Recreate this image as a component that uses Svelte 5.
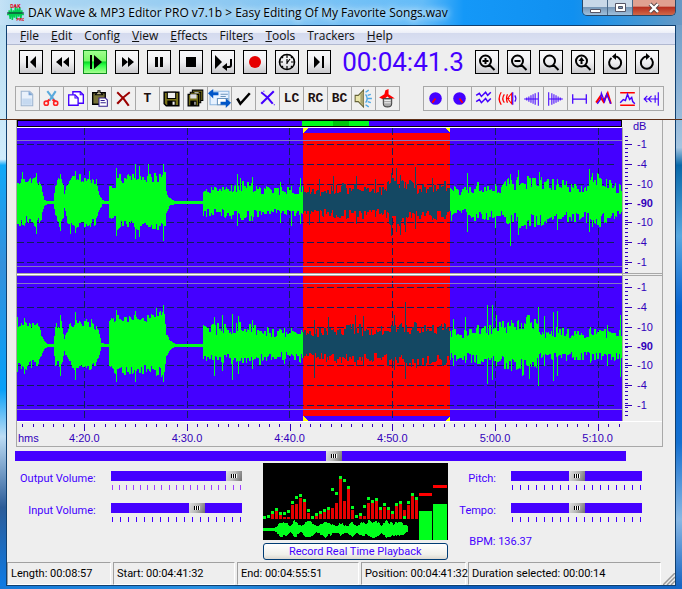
<script lang="ts">
  const menus = [
    ['', 'F', 'ile'], ['', 'E', 'dit'], ['Confi', 'g', ''], ['', 'V', 'iew'], ['', 'E', 'ffects'],
    ['Filte', 'r', 's'], ['', 'T', 'ools'], ['Trackers', '', ''], ['', 'H', 'elp']
  ];

  // every icon is a list of [path, fill, stroke, stroke width]
  const lens = 'M16 11a5.5 5.5 0 1 1-11 0a5.5 5.5 0 1 1 11 0M14.5 15l5 5';

  const transport = [
    { label: 'Go to start', shapes: [['M7 6h2v12H7zM17 6v12l-6-6z', '#000']] },
    { label: 'Rewind', shapes: [['M11 7v10l-6-5zM18 7v10l-6-5z', '#000']] },
    { label: 'Play', active: true, shapes: [['M7 5h2v14H7zM11 5l8 7-8 7z', '#000']] },
    { label: 'Fast forward', shapes: [['M7 7l6 5-6 5zM13 7l6 5-6 5z', '#000']] },
    { label: 'Pause', shapes: [['M8 7h3v10H8zM13 7h3v10h-3z', '#000']] },
    { label: 'Stop', shapes: [['M7 7h10v10H7z', '#000']] },
    { label: 'Loop', shapes: [['M4 5l7 7-7 7z', '#000'], ['M20 9v6q0 2-2 2h-4', 'none', '#000', 2], ['M16 13v8l-5-4z', '#000']] },
    { label: 'Record', shapes: [['M18 12a6 6 0 1 1-12 0a6 6 0 1 1 12 0', '#e60000']] },
    { label: 'Timer', shapes: [['M19.5 12a7.5 7.5 0 1 1-15 0a7.5 7.5 0 1 1 15 0', 'none', '#000', 1.6], ['M12 5v3M12 16v3M5 12h3M16 12h3M12 14V9M12 13l3-4M7 7l1 1M17 7l-1 1M7 17l1-1M17 17l-1-1', 'none', '#000', 1.2]] },
    { label: 'Go to end', shapes: [['M7 6l6 6-6 6zM15 6h2v12h-2z', '#000']] }
  ];

  const zooms = [
    { label: 'Zoom in', shapes: [[lens, 'none', '#000', 2], ['M10.5 8v6M7.5 11h6', 'none', '#000', 2]] },
    { label: 'Zoom out', shapes: [[lens, 'none', '#000', 2], ['M7.5 11h6', 'none', '#000', 2]] },
    { label: 'Zoom full', shapes: [[lens, 'none', '#000', 2]] },
    { label: 'Zoom vertical', shapes: [[lens, 'none', '#000', 2], ['M10.5 10v4', 'none', '#000', 2], ['M10.5 7l3 4h-6z', '#000']] },
    { label: 'Undo', shapes: [['M8.5 8a6 6 0 1 0 7.500 .2q-1.500-1.700-4-1.700', 'none', '#000', 2], ['M13 3v7l-4-3.500z', '#000']] },
    { label: 'Redo', shapes: [['M15.500 8a6 6 0 1 1-7.500 .2q1.500-1.700 4-1.700', 'none', '#000', 2], ['M11 3v7l4-3.500z', '#000']] }
  ];

  const blue = '#4400ff';
  const floppy = 'M5 6h14v13H7l-2-2z';

  const edit = [
    { label: 'New', shapes: [['M6 5h8l3 3v11H6z', '#e9f1fb', '#9db4d0', 1], ['M7 12h9v6H7z', '#c5d9f0'], ['M13 5v4h4z', '#7aa3d4']] },
    { label: 'Cut', shapes: [['M8 5l7 9M16 5l-6 9', 'none', '#5aa9dc', 2], ['M10 13l-2 2M13 13l3 2', 'none', '#f22', 2], ['M9 16.500a2 2 0 1 1-4 0a2 2 0 1 1 4 0M18 16.500a2 2 0 1 1-4 0a2 2 0 1 1 4 0', 'none', '#f22', 1.5]] },
    { label: 'Copy', shapes: [['M9.500 5.500h7l3 3v8h-10z', '#fff', blue, 1.3], ['M5.500 8.500h6l3 3v7h-9z', '#fff', blue, 1.3], ['M11.500 8.500v3h3M16.500 5.500v3h3', 'none', blue, 1]] },
    { label: 'Paste', shapes: [['M5.500 6.500h12v11h-12z', '#777236', '#000', 1.3], ['M8 8.500h7l-1.500-2h-1v-2h-2v2h-1z', '#ddd4aa', '#000', 1], ['M11.500 11.500h6l2 2v6h-8z', '#fff', '#352090', 1], ['M13 14h4M13 16h5', 'none', '#352090', 1]] },
    { label: 'Delete', shapes: [['M6 6q7 6 11 13M18 6Q11 11 6 17', 'none', '#9c0000', 2]] },
    { label: 'Title', text: 'T' },
    { label: 'Save', shapes: [[floppy, '#777018', '#000', 1.4], ['M8 6h8v6H8z', '#eee', '#000', 1], ['M8 14h8v5H8z', '#000'], ['M13 15h2v3h-2z', '#eee']] },
    { label: 'Save all', shapes: [['M9 4h10v10H9z', '#777018', '#000', 1], ['M7 6h10v10H7z', '#777018', '#000', 1], ['M5 8h10v11H5z', '#777018', '#000', 1.3], ['M7 8h6v4H7zM11 6h4v1h-4z', '#ddd'], ['M7 14h6v5H7z', '#000'], ['M11 15h1v3h-1z', '#fff']] },
    { label: 'Transfer', shapes: [['M3 5h18v13H3z', '#e7f2ff', '#8cb6e0', 1], ['M1 7l5-4v3h5v3H6v3z', '#0056c8'], ['M13 8h7M13 10h5', 'none', '#6b94bc', 1], ['M10 12h10v6H10z', '#fff', '#6b94bc', 1], ['M23 16l-5-4v3h-5v3h5v3z', '#0056c8']] },
    { label: 'Apply', shapes: [['M6 12l3 5L18 7', 'none', '#000', 2.4]] },
    { label: 'Clear', shapes: [['M6 6q7 5 11 11M18 5L6 17', 'none', blue, 2], ['M18 18h1M8 5h1', 'none', blue, 1]] },
    { label: 'Left channel', text: 'LC' },
    { label: 'Right channel', text: 'RC' },
    { label: 'Both channels', text: 'BC' },
    { label: 'Speaker', shapes: [['M4 9h3l5-5v16l-5-5H4z', '#e8e4a8', '#666338', 1], ['M9 8l3-3v14l-3-3z', '#a8a470'], ['M14 8q3 4 0 8M14 6l3-2M16 9l3-1M16 12h4M16 15l3 1M14 18l3 2', 'none', '#4ca7e4', 1.3]] },
    { label: 'Noise remover', shapes: [['M4 11l5-3 1-4 3-1v5l6 4h-5l-2-2-4 3z', '#f00'], ['M8 12h8v5q0 3-4 3t-4-3z', '#aaa', '#444', 1], ['M9 14h6M9 16h6', 'none', '#eee', 1]] }
  ];

  const effects = [
    { label: 'Pan left', shapes: [['M18 12a6 6 0 1 1-12 0a6 6 0 1 1 12 0', blue], ['M12 12l-3 4', 'none', '#f00', 1.5]] },
    { label: 'Pan right', shapes: [['M18 12a6 6 0 1 1-12 0a6 6 0 1 1 12 0', blue], ['M12 12l3 4', 'none', '#f00', 1.5]] },
    { label: 'Chorus', shapes: [['M5 9l3-2 2 3 4-4 2 3 3-3M5 15l3-2 2 3 4-4 2 3 3-3', 'none', blue, 1.4]] },
    { label: 'Echo', shapes: [['M6 6q-4 6 0 12M9 8q-3 4 0 8M12 8q-2 4 0 8', 'none', '#f00', 1.2], ['M14 12h-2l4-5v10l-4-5', 'none', '#f00', 1], ['M17 6v12M19 9q2 3 0 6', 'none', blue, 1.2]] },
    { label: 'Fade in', shapes: [['M5 12.500h14M7.500 11v3M9.500 10v5M11.500 9v7M13.500 8v9M15.500 7v11M18.500 6v13', 'none', blue, 1]] },
    { label: 'Fade out', shapes: [['M5 12.500h14M16.500 11v3M14.500 10v5M12.500 9v7M10.500 8v9M8.500 7v11M5.500 6v13', 'none', blue, 1]] },
    { label: 'Silence', shapes: [['M5.500 8v9M18.500 8v9M6 12.500h13', 'none', blue, 1.2]] },
    { label: 'Amplify', shapes: [['M5 16l4-6 3 5 4-8 3 10', 'none', '#f00', 2], ['M6 17l3-4 1-6 3 8 2-7 4 9', 'none', blue, 1.3]] },
    { label: 'Normalize', shapes: [['M5 6.500h14M5 18.500h14', 'none', '#f00', 1.3], ['M5 16l3-3 2 1 2-6 2 5 2-2 1 4 2 2', 'none', blue, 1.4]] },
    { label: 'Reverse', shapes: [['M5 12.500h13M8 9.500l-3 3 3 3M12 9.500l-3 3 3 3M15.500 9v7M18.500 6v13', 'none', blue, 1.1]] }
  ];

  // loudness envelopes: [x, level], straight lines between the points
  const envTop = [
    [0, 24], [6, 27], [9, 20], [14, 24], [19, 28], [24, 18], [27, 3], [30, 1], [36, 1], [38, 18], [43, 28], [46, 22], [47, 8],
    [50, 22], [60, 27], [70, 26], [79, 23], [82, 8], [85, 2], [91, 1], [92, 18], [98, 18], [99, 30], [108, 26], [120, 29],
    [138, 28], [148, 31], [149, 12], [152, 4], [158, 1], [185, 1], [186, 15], [204, 15], [220, 20], [240, 19], [257, 14],
    [285, 16], [300, 13], [320, 18], [350, 18], [366, 14], [373, 24], [385, 26], [400, 16], [417, 20], [433, 20], [442, 12],
    [460, 20], [480, 18], [493, 24], [510, 28], [530, 26], [550, 21], [566, 20], [580, 28], [605, 16]
  ];
  const envBottom = [
    [0, 24], [8, 26], [15, 22], [20, 23], [26, 6], [30, 1], [36, 1], [38, 22], [44, 26], [47, 6], [51, 20], [60, 28], [74, 25],
    [81, 18], [84, 2], [91, 1], [92, 26], [99, 30], [112, 31], [130, 29], [147, 35], [149, 12], [152, 6], [158, 1], [185, 1],
    [186, 20], [206, 21], [225, 23], [240, 21], [260, 15], [286, 19], [301, 16], [340, 21], [362, 17], [370, 21], [400, 23],
    [425, 22], [442, 14], [460, 21], [480, 22], [505, 32], [520, 24], [526, 11], [535, 18], [560, 15], [580, 16], [605, 15]
  ];

  // single loud hits: [x, up, down]
  const hitsTop = [
    [5, 30, 22], [19, 29, 31], [43, 28, 28], [53, 22, 31], [58, 31, 30], [72, 31, 22], [99, 34, 33], [118, 38, 36], [122, 36, 34],
    [131, 38, 24], [146, 38, 38], [220, 28, 23], [223, 24, 15], [235, 25, 18], [263, 20, 20], [274, 16, 23], [283, 24, 21],
    [292, 15, 22], [302, 23, 19], [316, 26, 14], [339, 26, 21], [358, 23, 14], [374, 29, 33], [379, 34, 29], [383, 27, 32],
    [388, 20, 29], [398, 35, 26], [415, 24, 17], [450, 29, 29], [478, 18, 25], [493, 28, 43], [501, 32, 32], [522, 30, 22],
    [540, 23, 27], [572, 33, 29], [575, 29, 24], [598, 19, 13]
  ];
  const hitsBottom = [
    [0, 28, 26], [7, 27, 28], [43, 30, 30], [58, 33, 34], [99, 35, 36], [118, 34, 36], [139, 37, 30], [146, 40, 36], [197, 28, 30],
    [205, 30, 25], [215, 31, 34], [221, 29, 28], [235, 25, 23], [267, 17, 18], [297, 25, 32], [311, 28, 14], [338, 30, 16],
    [346, 29, 19], [377, 30, 24], [388, 43, 33], [399, 22, 22], [436, 26, 20], [448, 28, 17], [470, 40, 38], [475, 40, 34],
    [479, 30, 20], [512, 30, 33], [521, 38, 40], [527, 29, 20], [536, 33, 35], [540, 34, 30], [573, 18, 17], [590, 20, 20], [603, 30, 31]
  ];

  function level(env: number[][], x: number) {
    const i = env.findIndex(p => p[0] > x);
    if (i < 1) return env[env.length - 1][1];
    const [x0, a] = env[i - 1];
    const [x1, b] = env[i];
    return a + (b - a) * (x - x0) / (x1 - x0);
  }

  function noise(n: number) {
    const s = Math.sin(n * 127.1) * 43758.5453;
    return s - Math.floor(s);
  }

  function wave(env: number[][], hits: number[][], from: number, to: number, seed: number) {
    let d = '';
    for (let x = from; x < to; x++) {
      const base = level(env, x);
      const rough = x > 185 ? 0.6 : 0.35;
      const step = Math.floor(x * 0.6) + seed;
      let up = base * (1.05 - rough * noise(step));
      let down = base * (1 - rough * noise(step + 900)) * 0.96;
      const hit = hits.find(h => h[0] === x);
      if (hit) {
        up = hit[1];
        down = hit[2];
      }
      d += `M${x + 0.5} ${-Math.round(up) - 1}V${Math.round(down)}`;
    }
    return d;
  }

  const selStart = 286;
  const selEnd = 433;

  const channels = [
    { name: 'Left', top: -75, env: envTop, hits: hitsTop, seed: 3, marks: 'M286-75h5l-5 5zM433-75h-5l5 5z' },
    { name: 'Right', top: -70, env: envBottom, hits: hitsBottom, seed: 41, marks: 'M286 75h5l-5-5zM433 75h-5l5-5z' }
  ];

  const levels = [-59, -39, -19, 19, 39, 59];
  const dbLabels = ['-1', '-4', '-10', '-90', '-10', '-4', '-1'];
  const times = ['4:20.0', '4:30.0', '4:40.0', '4:50.0', '5:00.0', '5:10.0'];
  const timeX = [67, 170, 272, 375, 478, 581];

  let timeTicks = '';
  for (let i = -6; i < 54; i++) {
    timeTicks += `M${Math.round(67 + i * 10.28) + 0.5} 2v${i % 10 === 0 ? 7 : 3}`;
  }

  let dbTicks = '';
  for (let y = -67; y < 70; y += 4) dbTicks += `M2 ${y + 0.5}h3`;
  for (const y of [...levels, 0]) dbTicks += `M2 ${y + 0.5}h7`;

  const bars = [0, 0, 5, 8, 4, 2, 2, 14, 15, 21, 17, 6, 0, 3, 5, 7, 9, 11, 16, 40, 18, 30, 9, 0, 3, 3, 16, 16, 18, 9, 12, 9, 5, 13, 15, 9, 14, 23, 19];
  const peaks = [2, 3, 7, 10, 6, 6, 8, 17, 22, 24, 19, 9, 2, 5, 7, 9, 11, 30, 26, 42, 39, 32, 12, 3, 5, 13, 21, 18, 20, 11, 15, 11, 7, 15, 17, 2, 17, 25, 21];
  const miniEnv = [[0, 1], [13, 2], [16, 8], [24, 6], [27, 3], [31, 9], [38, 3], [42, 8], [47, 8], [53, 3], [62, 8], [74, 3], [77, 7], [84, 3], [88, 9], [93, 3], [98, 8], [103, 5], [105, 9], [115, 8], [118, 4], [123, 9], [129, 6], [136, 8], [144, 3], [145, 6]];
  const mini = wave(miniEnv, [], 0, 145, 9);

  let scroll = $state(52.3);
  let output = $state(100);
  let input = $state(68);
  let pitch = $state(50);
  let tempo = $state(50);

  const status = ['Length: 00:08:57', 'Start: 00:04:41:32', 'End: 00:04:55:51', 'Position: 00:04:41:32', 'Duration selected: 00:00:14'];
</script>

{#snippet icon(shapes)}
  <svg viewBox="1 1 22 22" aria-hidden="true">
    {#each shapes as [d, fill, stroke, width]}
      <path {d} {fill} stroke={stroke ?? 'none'} stroke-width={width ?? 0} />
    {/each}
  </svg>
{/snippet}

{#snippet ticks(count)}
  <div class="ticks">
    {#each Array(count) as _}<i></i>{/each}
  </div>
{/snippet}

<div class="window">
  <header class="titlebar">
    <svg class="logo" viewBox="0 0 16 17" aria-hidden="true">
      <path d="M0 10h2V6l1 8 1-10 1 11 1-9 1 7 1-11 1 12 1-10 1 8 1-9 1 11 1-8v4h2" fill="none" stroke="#00d050" stroke-width="1.4" />
      <path d="M0 8.500h16" stroke="#123" />
      <text x="3" y="4" font-size="5">DAK</text>
      <text x="9" y="16" font-size="4">PRO</text>
    </svg>
    <h1>DAK Wave &amp; MP3 Editor PRO v7.1b &gt; Easy Editing Of My Favorite Songs.wav</h1>
    <div class="caption">
      <button aria-label="Minimize"><svg width="12" height="14"><path d="M1.500 8.500h10v3h-10z" fill="#fff" stroke="#556" /></svg></button>
      <button aria-label="Maximize"><svg width="12" height="14"><path d="M1.500 2.500h10v8h-10zM4.500 5.500v2h4v-2z" fill="#fff" fill-rule="evenodd" stroke="#556" /></svg></button>
      <button class="close" aria-label="Close"><svg width="12" height="14"><path d="M2 3l8 8M10 3l-8 8" stroke="#544" stroke-width="4" /><path d="M2 3l8 8M10 3l-8 8" stroke="#fff" stroke-width="2.400" /></svg></button>
    </div>
  </header>

  <main>
    <nav class="menubar">
      {#each menus as [before, key, after]}
        <a href="#menu">{before}<u>{key}</u>{after}</a>
      {/each}
    </nav>

    <div class="transport">
      <div class="big">
        {#each transport as b}
          <button class:active={b.active} aria-label={b.label}>{@render icon(b.shapes)}</button>
        {/each}
      </div>
      <output class="clock">00:04:41.3</output>
      <div class="big">
        {#each zooms as b}
          <button aria-label={b.label}>{@render icon(b.shapes)}</button>
        {/each}
      </div>
    </div>

    <div class="tools">
      {#each [edit, effects] as group}
        <div class="group">
          {#each group as b}
            <button aria-label={b.label}>
              {#if b.text}{b.text}{:else}{@render icon(b.shapes)}{/if}
            </button>
          {/each}
        </div>
      {/each}
    </div>

    <div class="seam"></div>

    <section class="panel">
      <svg class="overview" viewBox="0 0 605 7" preserveAspectRatio="none" aria-hidden="true">
        <rect width="605" height="7" fill="#000" />
        <rect x="1" y="1" width="603" height="5" fill="#4400ff" />
        <rect x="285" y="1" width="67" height="5" fill="#00ff1c" />
        <rect x="316" y="1" width="16" height="5" fill="#00c80c" />
      </svg>
      <div class="db-title">dB</div>

      {#each channels as ch}
        <svg class="channel" class:lower={ch.top === -70} viewBox="0 {ch.top} 605 145" preserveAspectRatio="none" role="img" aria-label="{ch.name} channel">
          <rect y="-75" width="605" height="150" fill="#4400ff" />
          <rect x={selStart} y="-70" width={selEnd - selStart} height="140" fill="#ff0000" />
          {#if ch.top === -75}
            <rect x={selStart} y="70" width={selEnd - selStart} height="5" fill="#ff0000" />
          {/if}
          <g stroke="#10205c" stroke-dasharray="7 3">
            {#each levels as y}
              <path d="M0 {y + 0.5}H598" />
            {/each}
            {#each timeX as x}
              <path d="M{x + 0.5}-75V75" />
            {/each}
          </g>
          <path d="M0-62.500H605M0 63.500H605" stroke="#8478c4" />
          <path d={wave(ch.env, ch.hits, 0, selStart, ch.seed)} stroke="#00ff1c" />
          <path d={wave(ch.env, ch.hits, selStart, selEnd, ch.seed)} stroke="#144863" />
          <path d={wave(ch.env, ch.hits, selEnd, 605, ch.seed)} stroke="#00ff1c" />
          <path d={ch.marks} fill="#ffff00" />
        </svg>
        <div class="db" class:lower={ch.top === -70}>
          <svg viewBox="0 {ch.top} 12 145" aria-hidden="true"><path d={dbTicks} stroke="#3300bb" /></svg>
          <ol>
            {#each dbLabels as label}
              <li class:mid={label === '-90'}>{label}</li>
            {/each}
          </ol>
        </div>
      {/each}

      <div class="axis">
        <svg viewBox="0 0 605 10" preserveAspectRatio="none" aria-hidden="true"><path d={timeTicks} stroke="#3300bb" /></svg>
        <span class="unit">hms</span>
        <div class="times">
          {#each times as t}<span>{t}</span>{/each}
        </div>
      </div>
    </section>

    <input class="scroll" type="range" aria-label="Scroll position" step="0.1" bind:value={scroll} />

    <section class="controls">
      <div class="knobs">
        <label for="output">Output Volume:</label>
        <div class="violet">
          <input id="output" type="range" bind:value={output} />
          {@render ticks(19)}
        </div>
        <label for="input">Input Volume:</label>
        <div>
          <input id="input" type="range" bind:value={input} />
          {@render ticks(17)}
        </div>
      </div>

      <div class="monitor">
        <svg viewBox="0 0 185 77" role="img" aria-label="Spectrum">
          <rect width="185" height="77" fill="#000" />
          {#each bars as h, i}
            <rect x={i * 4} y={56 - h} width="3" height={h} fill="#e60000" />
            <rect x={i * 4} y={55 - peaks[i]} width="3" height="3" fill="#00ff1c" />
          {/each}
          <path d={mini} transform="translate(0 67)" stroke="#00ff1c" />
          <path d="M156 48h13v29h-13zM170 41h14v36h-14z" fill="#00ff1c" />
          <path d="M156 30h13v3h-13zM170 22h14v3h-14z" fill="#ff0000" />
        </svg>
        <button>Record Real Time Playback</button>
      </div>

      <div class="knobs">
        <label for="pitch">Pitch:</label>
        <div>
          <input id="pitch" type="range" bind:value={pitch} />
          {@render ticks(17)}
        </div>
        <label for="tempo">Tempo:</label>
        <div>
          <input id="tempo" type="range" bind:value={tempo} />
          {@render ticks(17)}
        </div>
        <p>BPM: 136.37</p>
      </div>
    </section>

    <footer>
      {#each status as s}
        <span>{s}</span>
      {/each}
      <svg width="12" height="12" aria-hidden="true"><path d="M0 12L12 0M4 12l8-8M8 12l4-4" stroke="#999" stroke-width="1.500" /></svg>
    </footer>
  </main>
</div>

<style>
  :global(body) {
    margin: 0;
    font-family: Roboto, "Liberation Sans", sans-serif;
    font-size: 11px;
  }

  .window {
    box-sizing: border-box;
    min-height: 100vh;
    padding: 0 6px 4px;
    background:
      linear-gradient(90deg, #c4e2f6 0, #b0d8f2 3%, #8cc8f2 35%, #64bcf8 62%, #1498f8 68%, #1090f0 84%, #4c98d0 96%, #6898c4) 0 0 / 100% 25px no-repeat,
      linear-gradient(90deg, #1478d8, #2890e0 30%, #0c58b8 60%, #1468c8) 0 100% / 100% 4px no-repeat,
      linear-gradient(#b8dcf0 0, #d0ecfc 27%, #10a8f8 28%, #3490dc 45%, #08a0f8 66%, #bcdcf4 74%, #2c5c98 86%, #0c7ce8) 0 0 / 50% 100% no-repeat,
      linear-gradient(#6898c4 0, #a4c4e0 25%, #0868a8 28%, #58a8e0 40%, #0864d0 52%, #1470d0 75%, #88b8e4 88%, #1060c0) 100% 0 / 50% 100% no-repeat;
  }

  button {
    padding: 0;
    font: inherit;
  }

  svg {
    display: block;
  }

  .titlebar {
    display: flex;
    align-items: center;
    height: 25px;
    padding-left: 1px;
  }

  .logo {
    width: 17px;
    height: 18px;
    margin-right: 4px;
    fill: #e00020;
    font-weight: bold;
  }

  h1 {
    flex: 1;
    margin: 0;
    font: 12px/18px "Open Sans", "Noto Sans", sans-serif;
    color: #000;
    white-space: nowrap;
    text-shadow: 0 0 6px #fff, 0 0 8px #d8f0ff;
  }

  .caption {
    display: flex;
    align-self: flex-start;
    height: 15px;
    border: 1px solid #284868;
    border-top: 0;
    border-radius: 0 0 5px 5px;
    overflow: hidden;
  }

  .caption button {
    display: grid;
    place-items: center;
    width: 25px;
    border: 0;
    border-right: 1px solid #486888;
    background: linear-gradient(#c8d8e8 45%, #7898b8 50%, #a0c0dc);
  }

  .caption .close {
    width: 42px;
    border-right: 0;
    background: linear-gradient(#e0a090 40%, #b83020 50%, #d06848);
  }

  main {
    border: 1px solid #104070;
    background: #eeeeee;
  }

  .menubar {
    display: flex;
    gap: 12px;
    height: 18px;
    padding-left: 13px;
    border-bottom: 1px solid #b0b8d0;
    background: linear-gradient(#ffffff, #eceff8 38%, #d4daee 40%, #dce2f4);
    font: 12px/19px "Open Sans", "Noto Sans", sans-serif;
  }

  .menubar a {
    color: #111;
    text-decoration: none;
  }

  .transport {
    display: flex;
    justify-content: space-between;
    padding: 5px 16px 12px 12px;
  }

  .big {
    display: flex;
    gap: 8px;
  }

  .big button {
    width: 24px;
    height: 24px;
    border: 1px solid #000;
    background: linear-gradient(#f8f8fa, #f0f0f2 50%, #c8c8cc);
  }

  .big .active {
    border-color: #109020;
    background: linear-gradient(#a0ff90, #78f868 45%, #08d828 50%, #30ff48 65%, #a8ff90);
  }

  .clock {
    height: 24px;
    font: 26px/25px Roboto, "Liberation Sans", sans-serif;
    color: #4400ff;
  }

  .tools {
    display: flex;
    justify-content: space-between;
    margin: 0 11px 8px 8px;
  }

  .group {
    display: flex;
    border: 1px solid #a8a8a8;
    border-right: 0;
  }

  .group button {
    width: 24px;
    height: 23px;
    border: 0;
    border-right: 1px solid #a8a8a8;
    background: #f0f0f0;
    font: bold 13px/22px "Liberation Mono", monospace;
    color: #201010;
  }

  .seam {
    height: 1px;
    margin: 0 -7px;
    background: #603018;
  }

  .panel {
    display: grid;
    grid-template-columns: 1fr 40px;
    grid-template-rows: 7px 146px 148px 25px;
    margin: 0 12px 0 9px;
    border: 1px solid #a8a8a8;
    border-top: 0;
    font: 11px "Liberation Sans", sans-serif;
    color: #3300bb;
  }

  .panel svg {
    width: 100%;
    shape-rendering: crispEdges;
  }

  .panel .overview {
    height: 7px;
  }

  .panel .channel {
    height: 145px;
    border-top: 1px solid #fff;
  }

  .panel .db.lower,
  .panel .channel.lower {
    border-top: 3px double #a8a8a8;
  }

  .panel .channel.lower {
    background: #fff;
  }

  .db-title {
    height: 7px;
    padding-left: 11px;
    line-height: 13px;
  }

  .db {
    display: flex;
    border-left: 1px solid #a8a8a8;
    border-top: 1px solid transparent;
  }

  .panel .db svg {
    width: 12px;
    height: 145px;
  }

  .db ol {
    margin: 0;
    padding: 6px 0 0 2px;
    list-style: none;
    line-height: 20px;
  }

  .db.lower ol {
    padding-top: 1px;
  }

  .db .mid {
    line-height: 18px;
    font-weight: bold;
  }

  .axis {
    position: relative;
    grid-column: 1 / 3;
    border-top: 1px solid #fff;
  }

  .panel .axis svg {
    width: calc(100% - 40px);
    height: 10px;
  }

  .unit {
    position: absolute;
    left: 1px;
    top: 9px;
    line-height: 14px;
  }

  .times {
    display: grid;
    grid-template-columns: repeat(6, 1fr);
    margin-top: -1px;
    padding: 0 13px 0 16px;
    line-height: 14px;
    text-align: center;
  }

  input[type='range'] {
    display: block;
    appearance: none;
    width: 100%;
    height: 10px;
    margin: 0;
    background: #4400ff;
  }

  input[type='range']::-webkit-slider-thumb {
    appearance: none;
    width: 16px;
    height: 10px;
    background:
      linear-gradient(90deg, #000 1px, #fff 1px 2px, #000 2px 3px, #fff 3px 4px, #000 4px 5px, #fff 5px) 5px 3px / 6px 4px no-repeat,
      linear-gradient(110deg, #e0e0e0, #b8b8b8 50%, #707070);
  }

  input.scroll[type='range'] {
    width: calc(100% - 57px);
    margin: 4px 0 0 8px;
  }

  .controls {
    display: grid;
    grid-template-columns: auto 1fr auto;
    padding: 2px 33px 2px 13px;
    color: #4400ff;
  }

  .knobs {
    display: grid;
    grid-template-columns: auto 131px;
    grid-template-rows: 32px 32px 20px;
    column-gap: 15px;
    padding-top: 8px;
  }

  .knobs label {
    line-height: 15px;
    text-align: right;
  }

  .knobs p {
    grid-column: 1 / 3;
    margin: 0 0 0 10px;
    line-height: 14px;
  }

  .ticks {
    display: flex;
    justify-content: space-between;
    margin: 4px 1px 0;
  }

  .ticks i {
    width: 1px;
    height: 5px;
    background: #4400ff;
  }

  .violet i {
    background: #a040ff;
  }

  .monitor {
    width: 185px;
    margin-left: 21px;
  }

  .monitor svg {
    width: 100%;
    shape-rendering: crispEdges;
  }

  .monitor button {
    display: block;
    width: 100%;
    height: 17px;
    margin-top: 3px;
    border: 1px solid #003c74;
    border-radius: 3px;
    background: linear-gradient(#fff, #f0f0ea 70%, #dcd8d0);
    line-height: 15px;
    color: #4400ff;
  }

  footer {
    display: grid;
    grid-template-columns: 104px 122px 122px 105px 1fr 12px;
    column-gap: 2px;
    align-items: end;
  }

  footer span {
    height: 21px;
    padding-left: 3px;
    border: 1px solid #a0a0a0;
    border-right-color: #fff;
    border-bottom-color: #fff;
    line-height: 22px;
    color: #000;
    white-space: nowrap;
  }
</style>
